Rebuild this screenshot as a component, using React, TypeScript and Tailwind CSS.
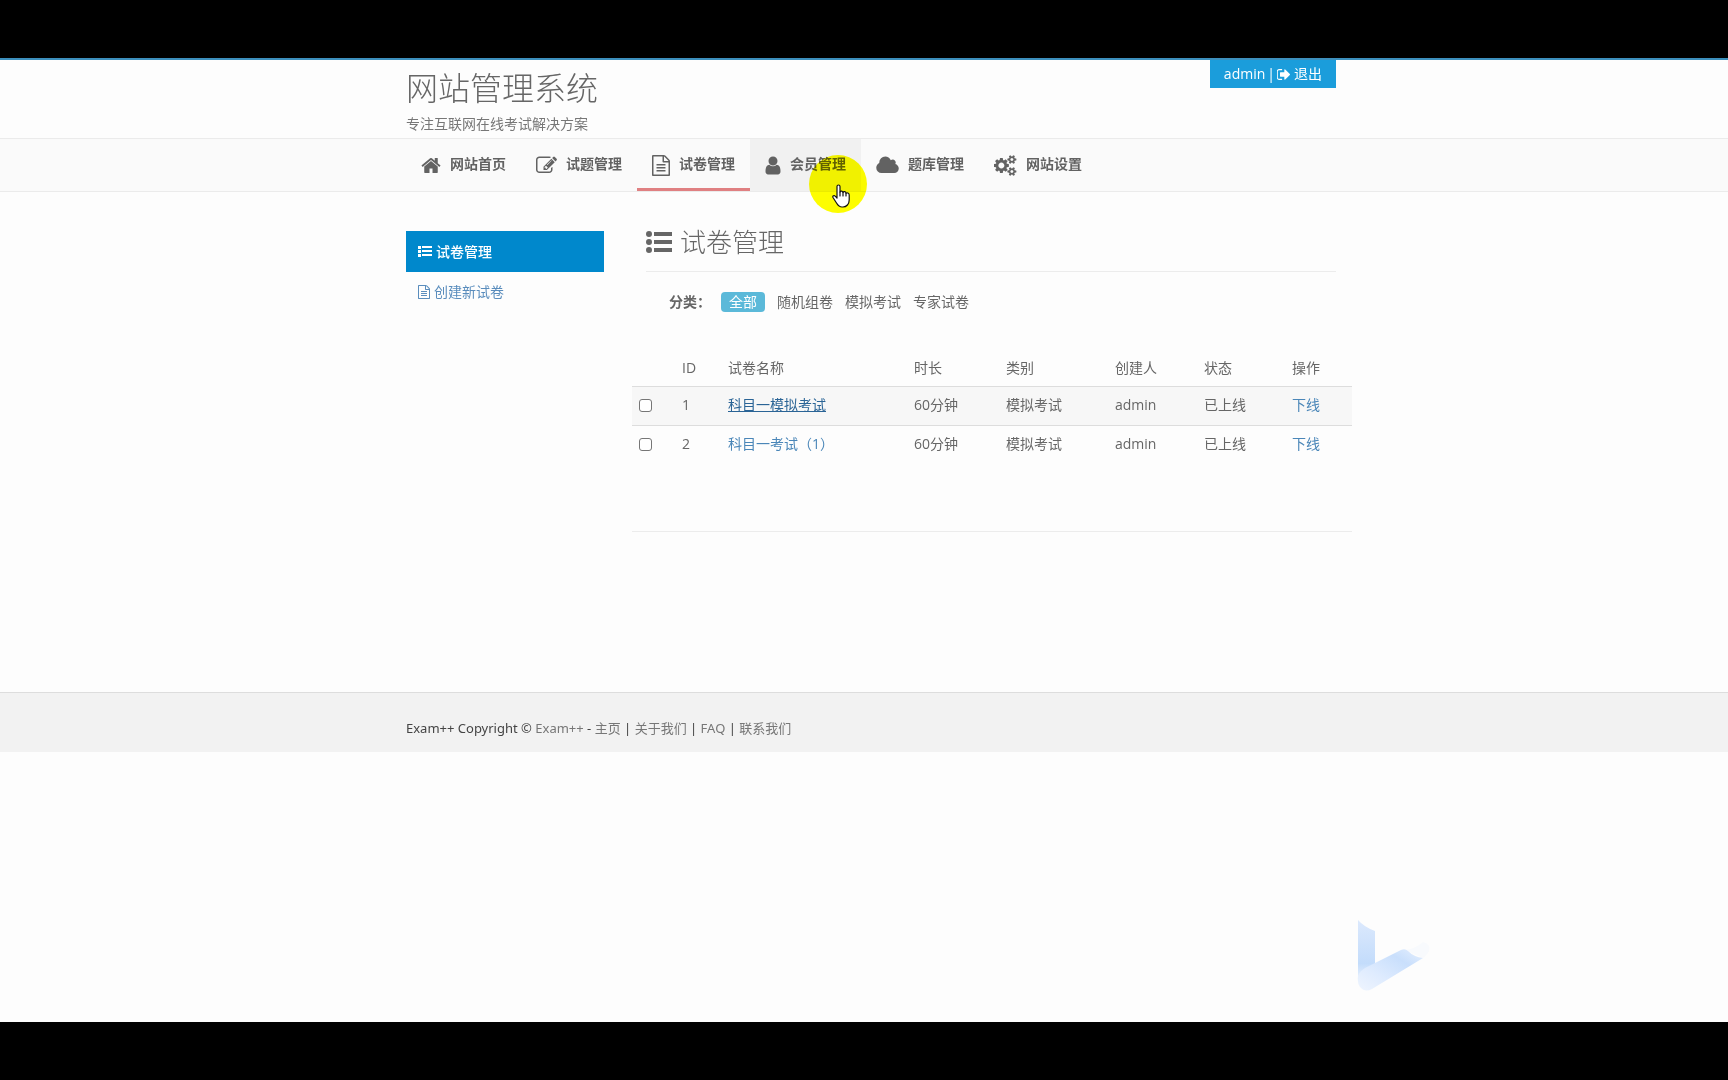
import React from "react";

type IconProps = { box: string; d: string; className: string };

function Icon({ box, d, className }: IconProps) {
  return (
    <svg viewBox={box} className={`shrink-0 ${className}`} fill="currentColor" aria-hidden="true">
      <path d={d} />
    </svg>
  );
}

const HOME =
  "M1472 992v480q0 26-19 45t-45 19h-384v-384h-256v384h-384q-26 0-45-19t-19-45v-480q0-1 .5-3t.5-3l575-474 575 474q1 2 1 6zm223-69l-62 74q-8 9-21 11h-3q-13 0-21-7l-692-577-692 577q-12 8-24 7-13-2-21-11l-62-74q-8-10-7-23.5t11-21.5l719-599q32-26 76-26t76 26l244 204v-195q0-14 9-23t23-9h192q14 0 23 9t9 23v408l219 182q10 8 11 21.5t-7 23.5z";
const EDIT =
  "M888 1184l116-116-152-152-116 116v56h96v96h56zm440-720q-16-16-33 1l-350 350q-17 17-1 33t33-1l350-350q17-17 1-33zm80 594v190q0 119-84.5 203.5t-203.5 84.5h-832q-119 0-203.5-84.5t-84.5-203.5v-832q0-119 84.5-203.5t203.5-84.5h832q63 0 117 25 15 7 18 23 3 17-9 29l-49 49q-14 14-32 8-23-6-45-6h-832q-66 0-113 47t-47 113v832q0 66 47 113t113 47h832q66 0 113-47t47-113v-126q0-13 9-22l64-64q15-15 35-7t20 29zm-96-738l288 288-672 672h-288v-288zm444 132l-92 92-288-288 92-92q28-28 68-28t68 28l152 152q28 28 28 68t-28 68z";
const FILE =
  "M1596 380q28 28 48 76t20 88v1152q0 40-28 68t-68 28h-1344q-40 0-68-28t-28-68v-1600q0-40 28-68t68-28h896q40 0 88 20t76 48zm-444-244v376h376q-10-29-22-41l-313-313q-12-12-41-22zm384 1528v-1024h-416q-40 0-68-28t-28-68v-416h-768v1536h1280zm-1024-864q0-14 9-23t23-9h704q14 0 23 9t9 23v64q0 14-9 23t-23 9h-704q-14 0-23-9t-9-23v-64zm736 224q14 0 23 9t9 23v64q0 14-9 23t-23 9h-704q-14 0-23-9t-9-23v-64q0-14 9-23t23-9h704zm0 256q14 0 23 9t9 23v64q0 14-9 23t-23 9h-704q-14 0-23-9t-9-23v-64q0-14 9-23t23-9h704z";
const USER =
  "M1536 1399q0 109-62.5 187t-150.5 78h-854q-88 0-150.5-78t-62.5-187q0-85 8.5-160.5t31.5-152 58.5-131 94-89 134.5-34.5q131 128 313 128t313-128q76 0 134.5 34.5t94 89 58.5 131 31.5 152 8.5 160.5zm-256-887q0 159-112.5 271.5t-271.5 112.5-271.5-112.5-112.5-271.5 112.5-271.5 271.5-112.5 271.5 112.5 112.5 271.5z";
const CLOUD =
  "M1856 1152q0 159-112.5 271.5t-271.5 112.5h-1088q-185 0-316.5-131.5t-131.5-316.5q0-132 71-241.5t187-163.5q-2-28-2-43 0-212 150-362t362-150q158 0 286.5 88t187.5 230q70-62 166-62 106 0 181 75t75 181q0 75-41 138 129 30 213 134.5t84 239.5z";
const COGS =
  "M832 896q0-106-75-181t-181-75-181 75-75 181 75 181 181 75 181-75 75-181zm768 512q0-52-38-90t-90-38-90 38-38 90q0 53 37.5 90.5t90.5 37.5 90.5-37.5 37.5-90.5zm0-1024q0-52-38-90t-90-38-90 38-38 90q0 53 37.5 90.5t90.5 37.5 90.5-37.5 37.5-90.5zm-384 421v185q0 10-7 19.5t-16 10.5l-155 24q-11 35-32 76 34 48 90 115 7 11 7 20 0 12-7 19-23 30-82.5 89.5t-78.5 59.5q-11 0-21-7l-115-90q-37 19-77 31-11 108-23 155-7 24-30 24h-186q-11 0-20-7.5t-10-17.5l-23-153q-34-10-75-31l-118 89q-7 7-20 7-11 0-21-8-144-133-144-160 0-9 7-19 10-14 41-53t47-61q-23-44-35-82l-152-24q-10-1-17-9.5t-7-19.5v-185q0-10 7-19.5t16-10.5l155-24q11-35 32-76-34-48-90-115-7-11-7-20 0-12 7-20 22-30 82-89t79-59q11 0 21 7l115 90q34-18 77-32 11-108 23-154 7-24 30-24h186q11 0 20 7.5t10 17.5l23 153q34 10 75 31l118-89q8-7 20-7 11 0 21 8 144 133 144 160 0 8-7 19-12 16-42 54t-45 60q23 48 34 82l152 23q10 2 17 10.5t7 19.5zm640 533v140q0 16-149 31-12 27-30 52 51 113 51 138 0 4-4 7-122 71-124 71-8 0-46-47t-52-68q-20 2-30 2t-30-2q-14 21-52 68t-46 47q-2 0-124-71-4-3-4-7 0-25 51-138-18-25-30-52-149-15-149-31v-140q0-16 149-31 13-29 30-52-51-113-51-138 0-4 4-7 4-2 35-20t59-34 30-16q8 0 46 46.5t52 67.5q20-2 30-2t30 2q51-71 92-112l6-2q4 0 124 70 4 3 4 7 0 25-51 138 17 23 30 52 149 15 149 31zm0-1024v140q0 16-149 31-12 27-30 52 51 113 51 138 0 4-4 7-122 71-124 71-8 0-46-47t-52-68q-20 2-30 2t-30-2q-14 21-52 68t-46 47q-2 0-124-71-4-3-4-7 0-25 51-138-18-25-30-52-149-15-149-31v-140q0-16 149-31 13-29 30-52-51-113-51-138 0-4 4-7 4-2 35-20t59-34 30-16q8 0 46 46.5t52 67.5q20-2 30-2t30 2q51-71 92-112l6-2q4 0 124 70 4 3 4 7 0 25-51 138 17 23 30 52 149 15 149 31z";
const SIGN_OUT =
  "M704 1440q0 4 1 20t.5 26.5-3 23.5-10 19.5-20.5 6.5h-320q-119 0-203.5-84.5t-84.5-203.5v-704q0-119 84.5-203.5t203.5-84.5h320q13 0 22.5 9.5t9.5 22.5q0 4 1 20t.5 26.5-3 23.5-10 19.5-20.5 6.5h-320q-66 0-113 47t-47 113v704q0 66 47 113t113 47h312l11.5 1 11.5 3 8 5.5 7 9 2 13.5zm928-544q0 26-19 45l-544 544q-19 19-45 19t-45-19-19-45v-288h-448q-26 0-45-19t-19-45v-384q0-26 19-45t45-19h448v-288q0-26 19-45t45-19 45 19l544 544q19 19 19 45z";
const LIST = "M0 0h3v3H0zM4 0h10v2H4zM0 4h3v3H0zM4 4h10v2H4zM0 8h3v3H0zM4 8h10v2H4z";
const LIST_UL =
  "M3 0a3 3 0 1 1 0 6a3 3 0 1 1 0-6zM3 8a3 3 0 1 1 0 6a3 3 0 1 1 0-6zM3 16a3 3 0 1 1 0 6a3 3 0 1 1 0-6zM8 1h18v4H8zM8 9h18v4H8zM8 17h18v4H8z";

const NAV = [
  { label: "网站首页", box: "64 0 1664 1792", d: HOME, size: "w-5", state: "border-transparent" },
  { label: "试题管理", box: "0 0 1792 1792", d: EDIT, size: "w-[21px]", state: "border-transparent" },
  { label: "试卷管理", box: "128 0 1536 1792", d: FILE, size: "w-[18px]", state: "border-[#e08082]" },
  { label: "会员管理", box: "256 0 1280 1792", d: USER, size: "w-4", state: "border-transparent bg-[#f1f1f1]" },
  { label: "题库管理", box: "-64 0 1920 1792", d: CLOUD, size: "w-[23px]", state: "border-transparent" },
  { label: "网站设置", box: "0 0 1856 1792", d: COGS, size: "w-[23px]", state: "border-transparent" },
];

const ROWS = [
  { id: 1, name: "科目一模拟考试", link: "text-[#2a6496] underline", bg: "bg-[#f7f7f7]" },
  { id: 2, name: "科目一考试（1）", link: "text-[#4a86b8]", bg: "" },
];

const COLUMNS = ["ID", "试卷名称", "时长", "类别", "创建人", "状态", "操作"];

function Header() {
  return (
    <header className="border-t-2 border-[#3c8fbc]">
      <div className="pl-3.5">
        <div className="mx-auto flex h-[78px] max-w-[930px] items-start justify-between">
          <div>
            <h1 className="pt-1.5 text-[32px] leading-[44px] font-light text-[#666]">网站管理系统</h1>
            <p className="pt-1 text-sm leading-5 text-[#777]">专注互联网在线考试解决方案</p>
          </div>
          <div className="flex h-7 items-center bg-[#1b9ddb] px-3.5 text-sm text-white">
            <a href="#admin">admin</a>
            <span className="px-0.5">|</span>
            <a href="#logout" className="flex items-center gap-1">
              <Icon box="96 128 1536 1536" d={SIGN_OUT} className="size-[13px]" />
              退出
            </a>
          </div>
        </div>
      </div>
      <nav className="border-y border-[#ebebeb] bg-[#fafafa] pl-3.5">
        <ul className="mx-auto flex max-w-[930px]">
          {NAV.map((item) => (
            <li key={item.label}>
              <a
                href="#nav"
                className={`flex h-[52px] items-center gap-[9px] border-b-[3px] px-[15px] text-sm font-bold text-[#626262] ${item.state}`}
              >
                <Icon box={item.box} d={item.d} className={`mt-1 h-[21px] ${item.size}`} />
                {item.label}
              </a>
            </li>
          ))}
        </ul>
      </nav>
    </header>
  );
}

function Sidebar() {
  return (
    <aside className="w-[198px] shrink-0 text-sm leading-5">
      <a href="#papers" className="flex h-[41px] items-center gap-1 bg-[#0088cc] px-3 font-medium text-white">
        <Icon box="0 0 14 11" d={LIST} className="h-[11px] w-3.5" />
        试卷管理
      </a>
      <a href="#new" className="flex h-10 items-center gap-1 px-3 text-[#5a8dbd]">
        <Icon box="128 0 1536 1792" d={FILE} className="h-3.5 w-3" />
        创建新试卷
      </a>
    </aside>
  );
}

function Papers() {
  return (
    <main className="min-w-0 flex-1">
      <div className="mr-4 ml-3.5 flex h-[41px] border-b border-[#ececec]">
        <h2 className="flex h-[22px] items-center gap-2 text-[26px] font-light text-[#666]">
          <Icon box="0 0 26 22" d={LIST_UL} className="h-[22px] w-[26px]" />
          试卷管理
        </h2>
      </div>
      <div className="flex items-center pt-5 pl-[37px] text-sm leading-5">
        <span className="w-[52px] font-bold">分类：</span>
        <div className="flex items-center gap-3">
          <a href="#all" className="rounded bg-[#5bb9d9] px-2 text-white">全部</a>
          <a href="#random">随机组卷</a>
          <a href="#mock">模拟考试</a>
          <a href="#expert">专家试卷</a>
        </div>
      </div>
      <table className="mt-9 w-full table-fixed text-left text-sm leading-5">
        <colgroup>
          <col className="w-[42px]" />
          <col className="w-[46px]" />
          <col className="w-[186px]" />
          <col className="w-[92px]" />
          <col className="w-[109px]" />
          <col className="w-[89px]" />
          <col className="w-[88px]" />
          <col className="w-[68px]" />
        </colgroup>
        <thead>
          <tr className="h-[38px]">
            <td />
            {COLUMNS.map((c) => (
              <th key={c} scope="col" className="px-2 pb-2 align-bottom font-normal">{c}</th>
            ))}
          </tr>
        </thead>
        <tbody className="align-top">
          {ROWS.map((r) => (
            <tr key={r.id} className={`h-[39px] border-t border-[#ddd] ${r.bg}`}>
              <td className="px-[7px] pt-3">
                <input
                  type="checkbox"
                  aria-label={r.name}
                  className="block size-[13px] appearance-none rounded-[3px] border border-[#767676] bg-white"
                />
              </td>
              <td className="px-2 pt-2">{r.id}</td>
              <td className="px-2 pt-2"><a href="#paper" className={r.link}>{r.name}</a></td>
              <td className="px-2 pt-2">60分钟</td>
              <td className="px-2 pt-2">模拟考试</td>
              <td className="px-2 pt-2">admin</td>
              <td className="px-2 pt-2">已上线</td>
              <td className="px-2 pt-2"><a href="#offline" className="text-[#4a86b8]">下线</a></td>
            </tr>
          ))}
        </tbody>
      </table>
      <hr className="mt-[67px] border-[#ececec]" />
    </main>
  );
}

function Footer() {
  return (
    <footer className="border-t border-[#ddd] bg-[#f2f2f2] pt-[25px] pb-3.5 pl-3.5 font-['Noto_Sans','Noto_Sans_CJK_SC',sans-serif] text-[13px] leading-5 text-[#444]">
      <p className="mx-auto max-w-[930px]">
        Exam++ Copyright © <a href="#exam" className="text-[#777]">Exam++</a> -{" "}
        <a href="#home" className="text-[#777]">主页</a> |{" "}
        <a href="#about" className="text-[#777]">关于我们</a> |{" "}
        <a href="#faq" className="text-[#777]">FAQ</a> |{" "}
        <a href="#contact" className="text-[#777]">联系我们</a>
      </p>
    </footer>
  );
}

function Halo() {
  return (
    <div className="pointer-events-none absolute top-[155px] left-[809px] size-[58px] rounded-full bg-[#ffff00] mix-blend-multiply" />
  );
}

function Hand() {
  return (
    <svg
      viewBox="0 0 18 24"
      className="pointer-events-none absolute top-[184px] left-[832px] h-6 w-[18px]"
      fill="#fff"
      stroke="#111"
      strokeWidth="1.2"
      strokeLinejoin="round"
      strokeLinecap="round"
      aria-hidden="true"
    >
      <path d="M5 14V2.5C5 .5 8 .5 8 2.5V8C8.500 6.500 11 6.800 11 8.500C11.500 7 14 7.500 14 9.300C15 8.300 17.200 9 17.200 11V16C17.200 20 14.500 23 11 23H10C7.500 23 6 21.500 4.500 19L1 13.500C.2 12 2.200 11 3.200 12.200Z" />
      <path d="M8 8v4M11 8.500V12M14 9.500V12" fill="none" />
    </svg>
  );
}

function Watermark() {
  return (
    <svg viewBox="0 0 76 74" className="pointer-events-none absolute right-[297px] bottom-[88px] h-[74px] w-[76px]" aria-hidden="true">
      <defs>
        <linearGradient id="stem" x1="0" y1="0" x2="0" y2="1">
          <stop offset="0" stopColor="#dce9fd" />
          <stop offset=".75" stopColor="#c3dcfb" />
          <stop offset="1" stopColor="#e6f0fe" />
        </linearGradient>
        <linearGradient id="arm" x1="0" y1="1" x2="1" y2="0">
          <stop offset="0" stopColor="#eff5fe" />
          <stop offset=".35" stopColor="#deebfe" />
          <stop offset=".7" stopColor="#c9dffc" />
          <stop offset="1" stopColor="#e6f0fe" />
        </linearGradient>
      </defs>
      <path d="M3 2Q9 9 20 13V48L3 60Z" fill="url(#stem)" />
      <path d="M50 32Q60 31 68 24Q76 26 74 33Q72 37 68 40Z" fill="#f8fafd" />
      <path d="M10 50L46 32Q50 30 53 33Q59 39 68 40L17 71Q10 75 5 69Q2 65 3 58Q5 53 10 50Z" fill="url(#arm)" />
    </svg>
  );
}

export default function App() {
  return (
    <div className="relative flex min-h-screen flex-col bg-[#fdfdfd] font-['Open_Sans','Noto_Sans_CJK_SC',sans-serif] text-[#666]">
      <div className="h-[58px] bg-black" />
      <Header />
      <div className="pl-3.5">
        <div className="mx-auto flex min-h-[500px] max-w-[930px] pt-[39px]">
          <Sidebar />
          <div className="-mr-4 flex flex-1 pl-7">
            <Papers />
          </div>
        </div>
      </div>
      <Footer />
      <div className="flex-1" />
      <div className="h-[58px] bg-black" />
      <Halo />
      <Hand />
      <Watermark />
    </div>
  );
}
